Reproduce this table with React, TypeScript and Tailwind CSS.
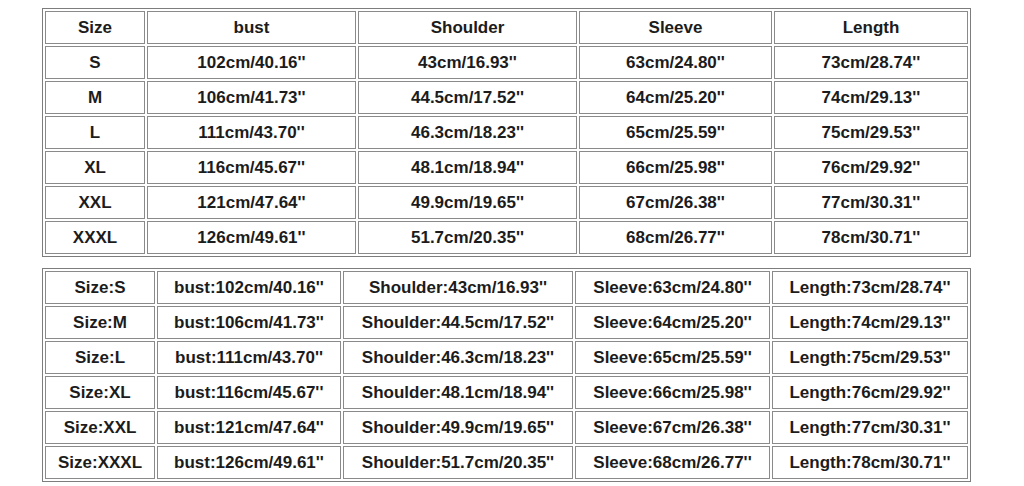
const top = {
  widths: [100, 209, 219, 193, 194],
  rows: [
    ["Size", "bust", "Shoulder", "Sleeve", "Length"],
    ["S", "102cm/40.16''", "43cm/16.93''", "63cm/24.80''", "73cm/28.74''"],
    ["M", "106cm/41.73''", "44.5cm/17.52''", "64cm/25.20''", "74cm/29.13''"],
    ["L", "111cm/43.70''", "46.3cm/18.23''", "65cm/25.59''", "75cm/29.53''"],
    ["XL", "116cm/45.67''", "48.1cm/18.94''", "66cm/25.98''", "76cm/29.92''"],
    ["XXL", "121cm/47.64''", "49.9cm/19.65''", "67cm/26.38''", "77cm/30.31''"],
    ["XXXL", "126cm/49.61''", "51.7cm/20.35''", "68cm/26.77''", "78cm/30.71''"],
  ],
};

const bottom = {
  widths: [110, 184, 230, 195, 196],
  rows: [
    ["Size:S", "bust:102cm/40.16''", "Shoulder:43cm/16.93''", "Sleeve:63cm/24.80''", "Length:73cm/28.74''"],
    ["Size:M", "bust:106cm/41.73''", "Shoulder:44.5cm/17.52''", "Sleeve:64cm/25.20''", "Length:74cm/29.13''"],
    ["Size:L", "bust:111cm/43.70''", "Shoulder:46.3cm/18.23''", "Sleeve:65cm/25.59''", "Length:75cm/29.53''"],
    ["Size:XL", "bust:116cm/45.67''", "Shoulder:48.1cm/18.94''", "Sleeve:66cm/25.98''", "Length:76cm/29.92''"],
    ["Size:XXL", "bust:121cm/47.64''", "Shoulder:49.9cm/19.65''", "Sleeve:67cm/26.38''", "Length:77cm/30.31''"],
    ["Size:XXXL", "bust:126cm/49.61''", "Shoulder:51.7cm/20.35''", "Sleeve:68cm/26.77''", "Length:78cm/30.71''"],
  ],
};

function SizeTable({ data }: { data: { widths: number[]; rows: string[][] } }) {
  return (
    <table className="table-fixed border-separate border-spacing-[2px] border border-[#7d7d7d] w-[929px]">
      <colgroup>
        {data.widths.map((w, i) => (
          <col key={i} style={{ width: w }} />
        ))}
      </colgroup>
      <tbody>
        {data.rows.map((row, r) => (
          <tr key={r}>
            {row.map((cell, c) => (
              <td
                key={c}
                className="h-[33px] p-0 border border-[#8a8a8a] text-center align-middle font-bold text-[17px] leading-none text-[#1c1c1c] whitespace-nowrap"
              >
                {cell}
              </td>
            ))}
          </tr>
        ))}
      </tbody>
    </table>
  );
}

export default function App() {
  return (
    <div className="w-[1024px] h-[486px] bg-white overflow-hidden pl-[42px] pt-[8px] font-['Liberation_Sans',Arial,sans-serif]">
      <div className="flex flex-col gap-[11px]">
        <SizeTable data={top} />
        <SizeTable data={bottom} />
      </div>
    </div>
  );
}
